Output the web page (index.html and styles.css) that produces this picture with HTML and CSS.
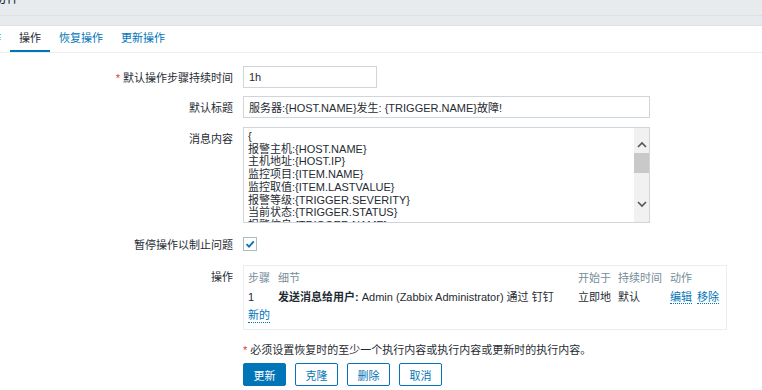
FILE: index.html
```html
<!DOCTYPE html>
<html lang="zh">
<head>
  <meta charset="UTF-8" />
  <meta name="viewport" content="width=device-width, initial-scale=1.0"/>
  <title>动作 - 操作</title>
  <link rel="stylesheet" href="styles.css">
</head>
<body>
  <div class="top-bar"><span class="page-title">动作</span></div>
  <div class="sub-bar"></div>

  <nav class="tabs">
    <a href="#">动作</a>
    <a href="#" class="active">操作</a>
    <a href="#">恢复操作</a>
    <a href="#">更新操作</a>
  </nav>

  <form class="form">
    <div class="row row-duration">
      <label class="label"><span class="req">*</span> 默认操作步骤持续时间</label>
      <input class="input input-short" type="text" value="1h">
    </div>

    <div class="row row-subject">
      <label class="label">默认标题</label>
      <input class="input input-wide" type="text" value="服务器:{HOST.NAME}发生: {TRIGGER.NAME}故障!">
    </div>

    <div class="row row-message">
      <label class="label label-top">消息内容</label>
      <div class="textarea">
        <div class="textarea-text">{<br>报警主机:{HOST.NAME}<br>主机地址:{HOST.IP}<br>监控项目:{ITEM.NAME}<br>监控取值:{ITEM.LASTVALUE}<br>报警等级:{TRIGGER.SEVERITY}<br>当前状态:{TRIGGER.STATUS}<br>报警信息:{TRIGGER.NAME}<br>告警时间:{EVENT.DATE} {EVENT.TIME}</div>
        <div class="scrollbar">
          <svg class="arrow" width="16" height="16" viewBox="0 0 16 16"><path d="M4 10 L8 6 L12 10" fill="none" stroke="#555" stroke-width="1.6"/></svg>
          <div class="thumb"></div>
          <div class="track"></div>
          <svg class="arrow" width="16" height="16" viewBox="0 0 16 16"><path d="M4 6 L8 10 L12 6" fill="none" stroke="#555" stroke-width="1.6"/></svg>
        </div>
      </div>
    </div>

    <div class="row row-pause">
      <label class="label">暂停操作以制止问题</label>
      <span class="checkbox">
        <svg width="12" height="12" viewBox="0 0 12 12"><path d="M2.5 6.2 L5 8.6 L9.8 3.4" fill="none" stroke="#0275b8" stroke-width="1.8"/></svg>
      </span>
    </div>

    <div class="row row-ops">
      <label class="label label-top">操作</label>
      <div class="ops-box">
        <div class="ops-grid ops-head">
          <span>步骤</span><span>细节</span><span>开始于</span><span>持续时间</span><span>动作</span>
        </div>
        <div class="ops-grid ops-row">
          <span>1</span>
          <span><b>发送消息给用户:</b> Admin (Zabbix Administrator) 通过 钉钉</span>
          <span>立即地</span>
          <span>默认</span>
          <span><a href="#" class="link">编辑</a> <a href="#" class="link">移除</a></span>
        </div>
        <a href="#" class="link new-link">新的</a>
      </div>
    </div>

    <div class="row row-note">
      <span class="note"><span class="req">*</span> 必须设置恢复时的至少一个执行内容或执行内容或更新时的执行内容。</span>
    </div>

    <div class="row row-buttons">
      <div class="buttons">
        <button type="button" class="btn btn-primary">更新</button>
        <button type="button" class="btn">克隆</button>
        <button type="button" class="btn">删除</button>
        <button type="button" class="btn">取消</button>
      </div>
    </div>
  </form>
</body>
</html>
```

FILE: styles.css
```css
body {
  font-family: "Liberation Sans", Arial, "Noto Sans CJK SC", sans-serif;
  font-size: 11px;
  color: #1f2c33;
  background-color: #fff;
  margin: 0;
  overflow: hidden;
}

.top-bar {
  height: 15px;
  background-color: #e8ebee;
  border-bottom: 1px solid #dde1e4;
  overflow: hidden;
}

.page-title {
  display: block;
  margin-left: -8px;
  margin-top: -10px;
  font-size: 14px;
  line-height: 14px;
}

.sub-bar {
  height: 9px;
  background-color: #e8ebee;
  border-bottom: 1px solid #dde1e4;
}

.tabs {
  display: flex;
  margin-left: -30px;
  height: 26px;
  border-bottom: 1px solid #ebeeef;
}

.tabs a {
  display: block;
  padding: 0 9px;
  line-height: 24px;
  color: #0275b8;
  text-decoration: none;
  border-bottom: 2px solid transparent;
}

.tabs a.active {
  color: #1f2c33;
  border-bottom-color: #0275b8;
}

.form {
  padding-top: 13px;
}

.row {
  display: flex;
  align-items: center;
}

.label {
  width: 233px;
  margin-right: 10px;
  text-align: right;
  flex-shrink: 0;
}

.label-top {
  align-self: flex-start;
}

.req {
  color: #e33734;
}

.input {
  box-sizing: border-box;
  height: 22px;
  border: 1px solid #cfd6db;
  padding: 0 5px;
  font: inherit;
  color: #1f2c33;
}

.input-short {
  width: 134px;
}

.input-wide {
  width: 407px;
}

.row-duration {
  margin-bottom: 8px;
}

.row-subject {
  margin-bottom: 9px;
}

.row-message .label {
  padding-top: 3px;
}

.textarea {
  box-sizing: border-box;
  width: 407px;
  height: 96px;
  border: 1px solid #cfd6db;
  display: flex;
  overflow: hidden;
}

.textarea-text {
  flex: 1;
  padding: 2px 4px;
  line-height: 12.7px;
  overflow: hidden;
}

.scrollbar {
  width: 15px;
  background-color: #f1f1f1;
  display: flex;
  flex-direction: column;
  align-items: center;
}

.arrow {
  flex-shrink: 0;
}

.scrollbar .arrow:first-child {
  margin-top: 9px;
}

.thumb {
  width: 15px;
  height: 20px;
  background-color: #c9c9c9;
}

.track {
  flex: 1;
}

.scrollbar .arrow:last-child {
  margin-bottom: 10px;
}

.row-message {
  margin-bottom: 13px;
}

.checkbox {
  box-sizing: border-box;
  width: 14px;
  height: 14px;
  border: 1px solid #aebcc4;
  display: flex;
  align-items: center;
  justify-content: center;
}

.row-pause {
  margin-bottom: 13px;
}

.row-ops .label {
  padding-top: 3px;
}

.ops-box {
  box-sizing: border-box;
  width: 484px;
  height: 65px;
  border: 1px solid #ebeeef;
  padding: 5px 4px 0;
}

.ops-grid {
  display: grid;
  grid-template-columns: 30px 300px 40px 52px auto;
  line-height: 14px;
}

.ops-head {
  color: #768d99;
  margin-bottom: 5px;
}

.ops-row {
  margin-bottom: 5px;
}

.ops-row b {
  font-weight: bold;
}

.link {
  color: #0275b8;
  text-decoration: none;
  border-bottom: 1px dotted #0275b8;
}

.ops-row .link + .link {
  margin-left: 2px;
}

.new-link {
  display: inline-block;
  line-height: 13px;
}

.row-ops {
  margin-bottom: 11px;
}

.note {
  margin-left: 243px;
}

.row-note {
  margin-bottom: 6px;
}

.buttons {
  display: flex;
  gap: 9px;
  margin-left: 243px;
}

.btn {
  box-sizing: border-box;
  height: 23px;
  width: 43px;
  padding: 0;
  font: inherit;
  background-color: #fff;
  color: #0275b8;
  border: 1px solid #0275b8;
  border-radius: 2px;
  cursor: pointer;
}

.btn-primary {
  background-color: #0275b8;
  color: #fff;
}
```
